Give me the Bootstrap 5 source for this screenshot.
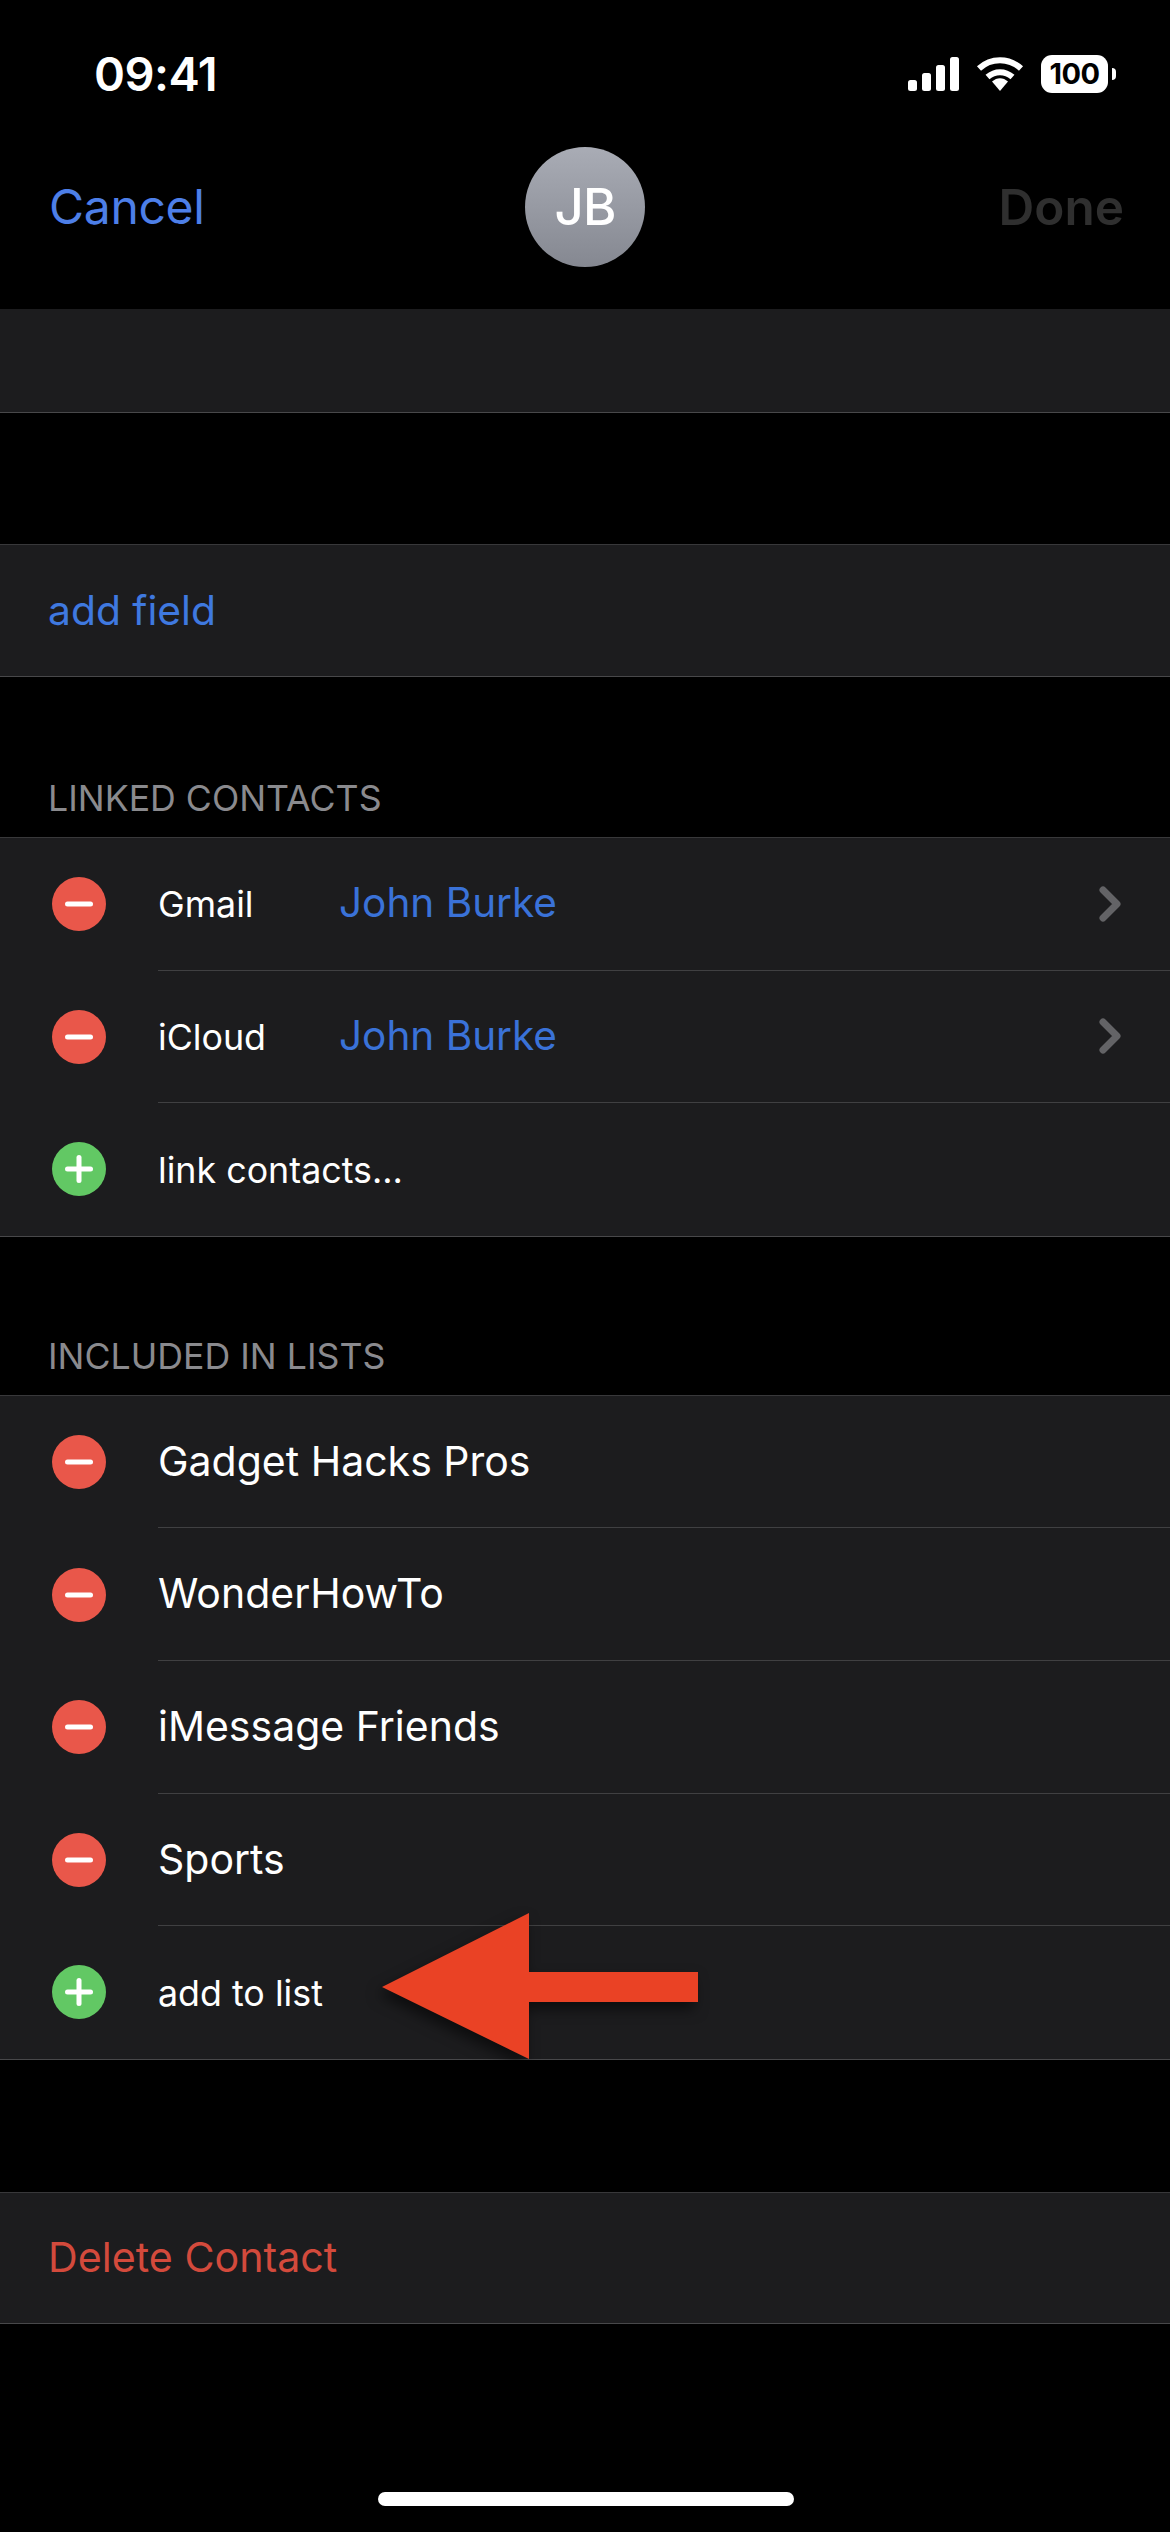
<!DOCTYPE html>
<html lang="en">
<head>
<meta charset="UTF-8">
<title>Edit Contact</title>
<link href="https://cdn.jsdelivr.net/npm/bootstrap@5.3.0/dist/css/bootstrap.min.css" rel="stylesheet">
<style>
    body {
        background: #000;
        color: #fff;
        font-family: Inter, "Liberation Sans", sans-serif;
        width: 1170px;
        height: 2532px;
        overflow: hidden;
        position: relative;
    }
    .top-area { height: 309px; }
    .status-row { height: 147px; padding: 50px 54px 0 94px; }
    .clock { font-size: 47px; font-weight: 600; line-height: 48px; letter-spacing: -0.5px; }
    .status-icons { gap: 17px; margin-top: 5px; }
    .batt {
        width: 67px; height: 38px; border-radius: 11px; background: #fff; color: #000;
        font-size: 29px; font-weight: 700; line-height: 38px; text-align: center; letter-spacing: -0.5px;
    }
    .batt-wrap { gap: 4px; }
    .batt-nub { width: 4px; height: 12px; background: #fff; border-radius: 0 4px 4px 0; }
    .nav-row { padding: 0 49px; height: 120px; }
    .nav-side { width: 180px; font-size: 48px; line-height: 56px; }
    .nav-cancel { color: #4d7fe8; letter-spacing: -0.3px; }
    .nav-done { color: #2f2f2f; font-weight: 600; font-size: 49.5px; margin-left: 3px; margin-right: -3px; }
    .avatar {
        width: 120px; height: 120px; border-radius: 50%;
        background: linear-gradient(#a9acb5, #858891);
        font-size: 51px; font-weight: 500; letter-spacing: -1px;
    }
    .group { background: #1c1c1e; border-bottom: 1px solid #48484a; }
    .group-top { border-top: 1px solid #38383a; }
    .blank-group { height: 104px; }
    .spacer-a { height: 131px; }
    .spacer-b { height: 132px; }
    .group-label {
        color: #8a8a8e; font-size: 35.7px; line-height: 40px; padding-left: 48px;
        height: 160px; padding-top: 101px;
    }
    .label-b { height: 158px; padding-top: 99.5px; }
    .one-row { height: 133px; padding-left: 48px; font-size: 40.8px; }
    .row-blue { color: #3f79e0; }
    .row-red { color: #d34a3c; height: 132px; font-size: 41.2px; }
    .edit-row { height: 132.6px; padding-left: 52px; }
    .edit-row .list-ic { flex: 0 0 54px; margin-right: 52px; }
    .row-body { height: 100%; padding-right: 49px; border-bottom: 1px solid #404042; font-size: 41px; }
    .edit-row:last-child .row-body { border-bottom: 0; }
    .small-txt { font-size: 35.8px; padding-top: 2px; }
    .src-name { width: 181px; }
    .contact-name { color: #3a72d8; font-size: 40.5px; }
    .home-bar {
        position: absolute; left: 378px; top: 2492px;
        width: 416px; height: 14px; border-radius: 7px; background: #fff;
    }
    .note-arrow {
        position: absolute; left: 370px; top: 1905px;
        filter: drop-shadow(-4px 7px 7px rgba(0,0,0,.55));
    }
</style>
</head>
<body>
    <div class="top-area">
        <div class="status-row d-flex justify-content-between align-items-start">
            <div class="clock">09:41</div>
            <div class="status-icons d-flex align-items-center">
                <svg width="51" height="34" viewBox="0 0 51 34" fill="#fff">
                    <rect x="0" y="23" width="9" height="11" rx="2.5"/>
                    <rect x="14" y="16" width="9" height="18" rx="2.5"/>
                    <rect x="28" y="8" width="9" height="26" rx="2.5"/>
                    <rect x="42" y="0" width="9" height="34" rx="2.5"/>
                </svg>
                <svg width="48" height="34" viewBox="0 0 48 34" fill="none" stroke="#fff">
                    <path d="M3 11.5C15 .5 33 .5 45 11.5" stroke-width="6"/>
                    <path d="M11.5 20C19 13.5 29 13.5 36.5 20" stroke-width="6"/>
                    <path d="M16 24.5C21 20 27 20 32 24.5L24 34Z" fill="#fff" stroke="none"/>
                </svg>
                <div class="batt-wrap d-flex align-items-center">
                    <div class="batt">100</div>
                    <div class="batt-nub"></div>
                </div>
            </div>
        </div>
        <div class="nav-row d-flex justify-content-between align-items-center">
            <div class="nav-side nav-cancel">Cancel</div>
            <div class="avatar d-flex align-items-center justify-content-center">JB</div>
            <div class="nav-side nav-done text-end">Done</div>
        </div>
    </div>

    <div class="group blank-group"></div>
    <div class="spacer-a"></div>

    <div class="group group-top one-row row-blue d-flex align-items-center">add field</div>

    <div class="group-label">LINKED CONTACTS</div>
    <div class="group group-top">
        <div class="edit-row d-flex align-items-center">
            <svg class="list-ic" width="54" height="54" viewBox="0 0 54 54"><circle cx="27" cy="27" r="27" fill="#e9574a"/><rect x="13" y="24.5" width="28" height="5" rx="2.5" fill="#fff"/></svg>
            <div class="row-body flex-grow-1 d-flex align-items-center">
                <span class="src-name small-txt">Gmail</span>
                <span class="contact-name flex-grow-1">John Burke</span>
                <svg width="22" height="36" viewBox="0 0 22 36" fill="none" stroke="#636366" stroke-width="7" stroke-linecap="round" stroke-linejoin="round"><path d="M4 4l14 14L4 32"/></svg>
            </div>
        </div>
        <div class="edit-row d-flex align-items-center">
            <svg class="list-ic" width="54" height="54" viewBox="0 0 54 54"><circle cx="27" cy="27" r="27" fill="#e9574a"/><rect x="13" y="24.5" width="28" height="5" rx="2.5" fill="#fff"/></svg>
            <div class="row-body flex-grow-1 d-flex align-items-center">
                <span class="src-name small-txt">iCloud</span>
                <span class="contact-name flex-grow-1">John Burke</span>
                <svg width="22" height="36" viewBox="0 0 22 36" fill="none" stroke="#636366" stroke-width="7" stroke-linecap="round" stroke-linejoin="round"><path d="M4 4l14 14L4 32"/></svg>
            </div>
        </div>
        <div class="edit-row d-flex align-items-center">
            <svg class="list-ic" width="54" height="54" viewBox="0 0 54 54"><circle cx="27" cy="27" r="27" fill="#62c864"/><rect x="13" y="24.5" width="28" height="5" rx="2.5" fill="#fff"/><rect x="24.5" y="13" width="5" height="28" rx="2.5" fill="#fff"/></svg>
            <div class="row-body flex-grow-1 d-flex align-items-center small-txt">link contacts...</div>
        </div>
    </div>

    <div class="group-label label-b">INCLUDED IN LISTS</div>
    <div class="group group-top">
        <div class="edit-row d-flex align-items-center">
            <svg class="list-ic" width="54" height="54" viewBox="0 0 54 54"><circle cx="27" cy="27" r="27" fill="#e9574a"/><rect x="13" y="24.5" width="28" height="5" rx="2.5" fill="#fff"/></svg>
            <div class="row-body flex-grow-1 d-flex align-items-center">Gadget Hacks Pros</div>
        </div>
        <div class="edit-row d-flex align-items-center">
            <svg class="list-ic" width="54" height="54" viewBox="0 0 54 54"><circle cx="27" cy="27" r="27" fill="#e9574a"/><rect x="13" y="24.5" width="28" height="5" rx="2.5" fill="#fff"/></svg>
            <div class="row-body flex-grow-1 d-flex align-items-center">WonderHowTo</div>
        </div>
        <div class="edit-row d-flex align-items-center">
            <svg class="list-ic" width="54" height="54" viewBox="0 0 54 54"><circle cx="27" cy="27" r="27" fill="#e9574a"/><rect x="13" y="24.5" width="28" height="5" rx="2.5" fill="#fff"/></svg>
            <div class="row-body flex-grow-1 d-flex align-items-center">iMessage Friends</div>
        </div>
        <div class="edit-row d-flex align-items-center">
            <svg class="list-ic" width="54" height="54" viewBox="0 0 54 54"><circle cx="27" cy="27" r="27" fill="#e9574a"/><rect x="13" y="24.5" width="28" height="5" rx="2.5" fill="#fff"/></svg>
            <div class="row-body flex-grow-1 d-flex align-items-center">Sports</div>
        </div>
        <div class="edit-row d-flex align-items-center">
            <svg class="list-ic" width="54" height="54" viewBox="0 0 54 54"><circle cx="27" cy="27" r="27" fill="#62c864"/><rect x="13" y="24.5" width="28" height="5" rx="2.5" fill="#fff"/><rect x="24.5" y="13" width="5" height="28" rx="2.5" fill="#fff"/></svg>
            <div class="row-body flex-grow-1 d-flex align-items-center small-txt">add to list</div>
        </div>
    </div>

    <div class="spacer-b"></div>
    <div class="group group-top one-row row-red d-flex align-items-center">Delete Contact</div>

    <svg class="note-arrow" width="340" height="160" viewBox="0 0 340 160"><path d="M12 82L159 8V67H328V97H159V154Z" fill="#ea4225"/></svg>
    <div class="home-bar"></div>

    <script src="https://cdn.jsdelivr.net/npm/bootstrap@5.3.0/dist/js/bootstrap.bundle.min.js"></script>
</body>
</html>
